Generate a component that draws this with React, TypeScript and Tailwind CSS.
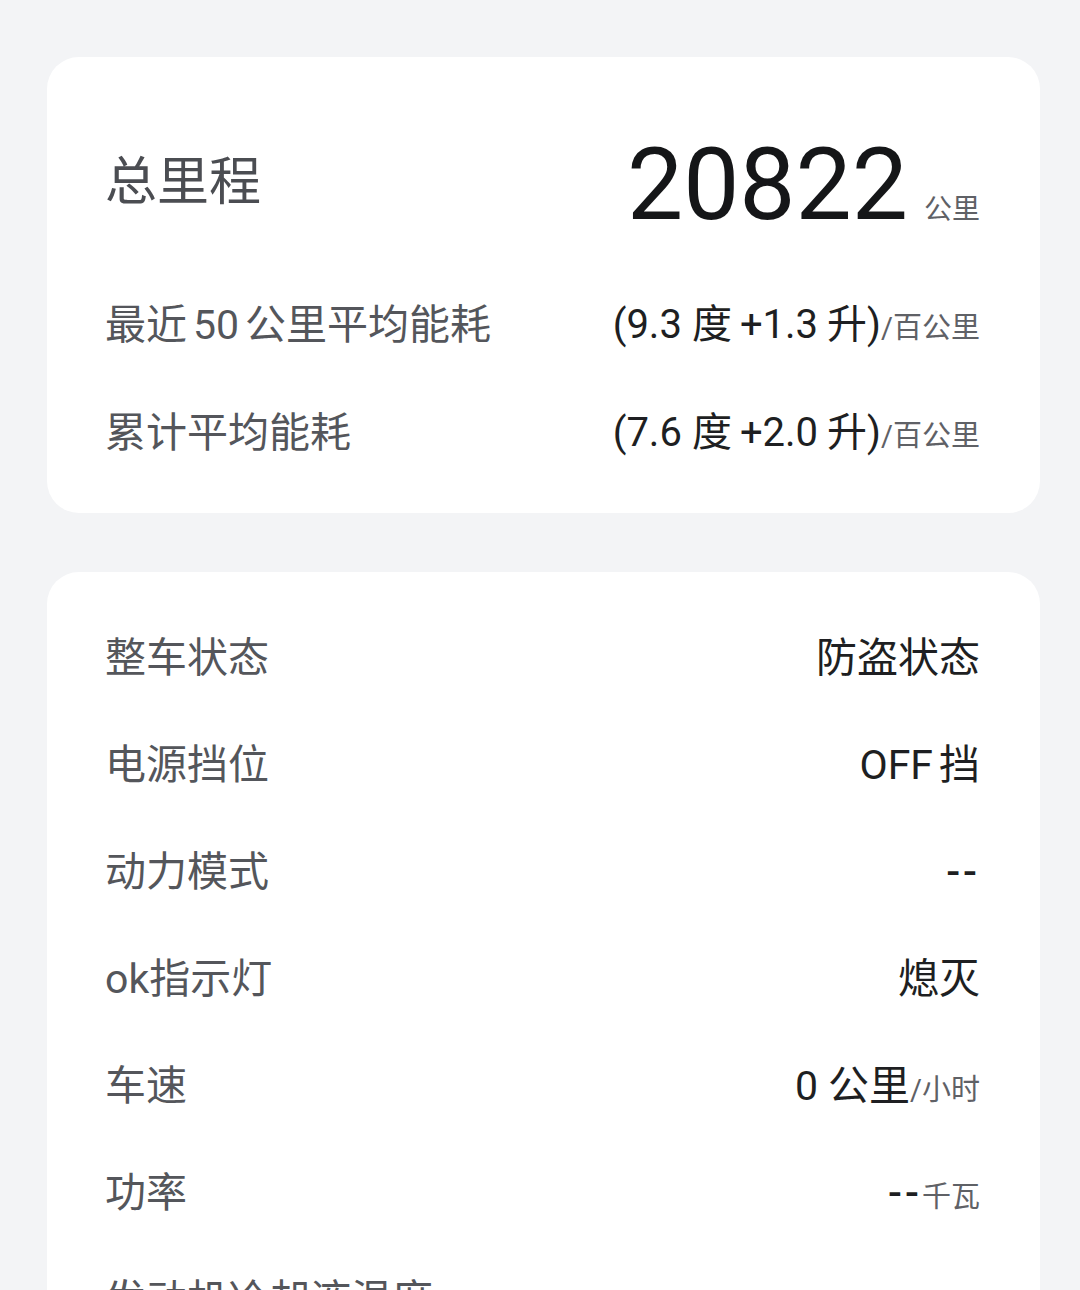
import React from "react";

const font = { fontFamily: 'Roboto, "Noto Sans CJK SC", sans-serif' };

function Unit({ children }: { children: React.ReactNode }) {
  return <span className="text-[29px] text-[#5f6166]">{children}</span>;
}

function Row({ label, value }: { label: React.ReactNode; value?: React.ReactNode }) {
  return (
    <div className="flex h-[107px] items-center justify-between">
      <div className="-ml-[2px] text-[41px] leading-none text-[#54565b]">{label}</div>
      <div className="flex items-baseline text-[41px] leading-none text-[#1e1f22]">{value}</div>
    </div>
  );
}

export default function App() {
  return (
    <div className="min-h-[1290px] w-[1080px] overflow-hidden bg-[#f3f4f6] pt-[57px]" style={font}>
      <div className="ml-[47px] flex w-[993px] flex-col gap-[59px]">
        {/* Card 1 */}
        <div className="rounded-[32px] bg-white px-[60px] pb-[26px] pt-[38px]">
          <div className="flex h-[176px] items-center justify-between">
            <div className="-ml-[2px] text-[52px] leading-none text-[#4b4d52]">总里程</div>
            <div className="flex items-baseline gap-[16px] pt-[4px]">
              <span className="text-[100px] font-normal leading-none text-[#151618]">20822</span>
              <span className="text-[28px] leading-none text-[#5f6166]">公里</span>
            </div>
          </div>
          <div className="flex h-[108px] items-center justify-between">
            <div className="-ml-[2px] text-[41px] leading-none text-[#54565b]">
              最近<span className="mx-[6px]">50</span>公里平均能耗
            </div>
            <div className="flex items-baseline text-[40px] leading-none text-[#1e1f22]">
              <span>(9.3</span>
              <span className="ml-[10px] mr-[8px]">度</span>
              <span>+1.3</span>
              <span className="ml-[9px]">升</span>
              <span>)</span>
              <Unit>/百公里</Unit>
            </div>
          </div>
          <div className="flex h-[108px] items-center justify-between">
            <div className="-ml-[2px] text-[41px] leading-none text-[#54565b]">累计平均能耗</div>
            <div className="flex items-baseline text-[40px] leading-none text-[#1e1f22]">
              <span>(7.6</span>
              <span className="ml-[10px] mr-[8px]">度</span>
              <span>+2.0</span>
              <span className="ml-[9px]">升</span>
              <span>)</span>
              <Unit>/百公里</Unit>
            </div>
          </div>
        </div>

        {/* Card 2 */}
        <div className="rounded-t-[32px] bg-white px-[60px] pb-[40px] pt-[33px]">
          <Row label="整车状态" value={<span>防盗状态</span>} />
          <Row
            label="电源挡位"
            value={
              <>
                <span className="mr-[6px]">OFF</span>
                <span>挡</span>
              </>
            }
          />
          <Row label="动力模式" value={<span className="font-medium tracking-[3px]">--</span>} />
          <Row label={<span>ok指示灯</span>} value={<span>熄灭</span>} />
          <Row
            label="车速"
            value={
              <>
                <span className="mr-[10px]">0</span>
                <span>公里</span>
                <Unit>/小时</Unit>
              </>
            }
          />
          <Row
            label="功率"
            value={
              <>
                <span className="font-medium tracking-[3px]">--</span>
                <Unit>千瓦</Unit>
              </>
            }
          />
          <Row label="发动机冷却液温度" />
        </div>
      </div>
    </div>
  );
}
